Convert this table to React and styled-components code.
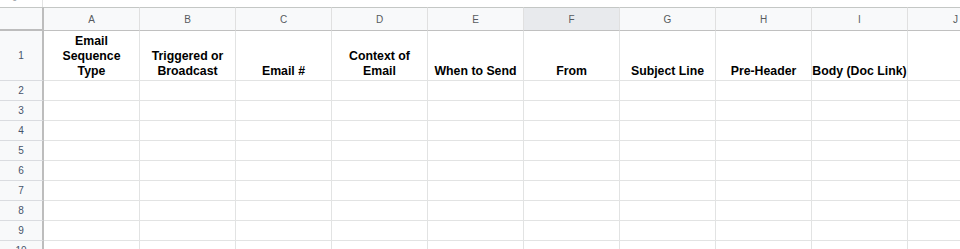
import React from "react";
import styled, { createGlobalStyle } from "styled-components";

const GlobalStyle = createGlobalStyle`
  html, body { margin: 0; padding: 0; background: #ffffff; }
  body { font-family: "Liberation Sans", Arial, sans-serif; overflow: hidden; }
`;

const Sheet = styled.div`
  width: 960px;
  height: 249px;
  overflow: hidden;
  background: #ffffff;
`;

/* sliver of the row scrolled above the frozen header */
const TopStrip = styled.div`
  display: grid;
  grid-template-columns: 43px 1fr;
  height: 7px;
  overflow: hidden;
`;

const StripNumber = styled.div`
  border-right: 1px solid #e2e3e3;
  padding-left: 12px;
  font-size: 10px;
  line-height: 10px;
  color: #9aa0a6;
  margin-top: -7px;
`;

const Grid = styled.div`
  display: grid;
  grid-template-columns: 44px repeat(10, 96px);
  grid-template-rows: 24px 50px repeat(8, 20px) 20px;
  width: max-content;
`;

const Corner = styled.div`
  box-sizing: border-box;
  background: #f8f9fa;
  border-top: 1px solid #c4c7c5;
  border-right: 2px solid #bdbdbd;
  border-bottom: 2px solid #bdbdbd;
`;

const ColHeader = styled.div`
  box-sizing: border-box;
  display: flex;
  align-items: center;
  justify-content: center;
  background: ${(p) => (p.$active ? "#e8eaed" : "#f8f9fa")};
  border-top: 1px solid #c4c7c5;
  border-right: 1px solid #e0e0e0;
  border-bottom: 1px solid #c0c0c0;
  color: #575b60;
  font-size: 10px;
  padding-top: 1px;
`;

const RowHeader = styled.div`
  box-sizing: border-box;
  display: flex;
  align-items: center;
  justify-content: center;
  background: #f8f9fa;
  border-right: 2px solid #bdbdbd;
  border-bottom: 1px solid #dadce0;
  color: #46536a;
  font-size: 10px;
`;

const Cell = styled.div`
  box-sizing: border-box;
  border-right: 1px solid #e2e3e3;
  border-bottom: 1px solid #e2e3e3;
  background: #ffffff;
`;

const TitleCell = styled(Cell)`
  display: flex;
  flex-direction: column;
  justify-content: flex-end;
  align-items: center;
  padding-bottom: 1px;
  font-weight: bold;
  font-size: 12.3px;
  line-height: 15px;
  color: #000000;
  text-align: center;
  overflow: visible;
`;

const TitleLine = styled.span`
  display: block;
  white-space: nowrap;
`;

const columns = ["A", "B", "C", "D", "E", "F", "G", "H", "I", "J"];

const titles = [
  ["Email", "Sequence", "Type"],
  ["Triggered or", "Broadcast"],
  ["Email #"],
  ["Context of", "Email"],
  ["When to Send"],
  ["From"],
  ["Subject Line"],
  ["Pre-Header"],
  ["Body (Doc Link)"],
  [],
];

const bodyRows = [2, 3, 4, 5, 6, 7, 8, 9, 10];

export default function App() {
  return (
    <>
      <GlobalStyle />
      <Sheet>
        <TopStrip>
          <StripNumber>9</StripNumber>
          <div />
        </TopStrip>
        <Grid>
          <Corner />
          {columns.map((c) => (
            <ColHeader key={c} $active={c === "F"}>
              {c}
            </ColHeader>
          ))}

          <RowHeader>1</RowHeader>
          {titles.map((lines, i) => (
            <TitleCell key={i}>
              {lines.map((l) => (
                <TitleLine key={l}>{l}</TitleLine>
              ))}
            </TitleCell>
          ))}

          {bodyRows.map((r) => (
            <React.Fragment key={r}>
              <RowHeader>{r}</RowHeader>
              {columns.map((c) => (
                <Cell key={c} />
              ))}
            </React.Fragment>
          ))}
        </Grid>
      </Sheet>
    </>
  );
}
